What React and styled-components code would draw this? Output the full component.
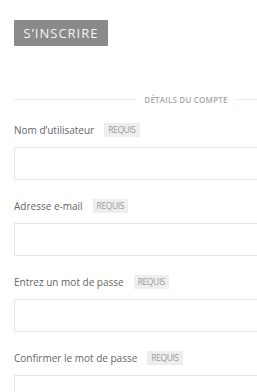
import styled, { createGlobalStyle } from "styled-components";

const GlobalStyle = createGlobalStyle`
  html, body {
    margin: 0;
    padding: 0;
    background: #fff;
    overflow: hidden;
  }
  body {
    font-family: "Open Sans", "Liberation Sans", sans-serif;
  }
`;

const Page = styled.div`
  width: 344px;
  padding: 20px 0 0 14px;
`;

const SignupButton = styled.button`
  all: unset;
  display: inline-flex;
  align-items: center;
  justify-content: center;
  box-sizing: border-box;
  width: 94px;
  height: 26px;
  background: #8a8a8a;
  color: #f4f4f4;
  font-family: "Open Sans", sans-serif;
  font-size: 13px;
  letter-spacing: 1px;
  border-radius: 1px;
  cursor: pointer;
`;

const Divider = styled.div`
  display: flex;
  align-items: center;
  gap: 8px;
  margin-top: 48px;
  font-size: 8px;
  font-weight: 600;
  color: #a8a8a8;
  text-transform: uppercase;
  letter-spacing: 0.2px;
  &::before,
  &::after {
    content: "";
    flex: 1;
    height: 1px;
    background: #ececec;
  }
`;

const Field = styled.div`
  margin-top: ${(p) => p.$top}px;
`;

const Label = styled.label`
  display: flex;
  align-items: center;
  gap: 10px;
  font-size: 10px;
  color: #666;
  height: 15px;
`;

const Badge = styled.span`
  display: inline-block;
  background: #eeeeee;
  color: #9c9c9c;
  font-size: 8.5px;
  padding: 1px 4px;
  line-height: 12px;
  letter-spacing: -0.4px;
  text-transform: uppercase;
`;

const Input = styled.input`
  display: block;
  box-sizing: border-box;
  width: 100%;
  height: 33px;
  margin-top: 10px;
  border: 1px solid #e6e6e6;
  background: #fff;
  outline: none;
`;

const fields = [
  "Nom d’utilisateur",
  "Adresse e-mail",
  "Entrez un mot de passe",
  "Confirmer le mot de passe",
];

export default function App() {
  return (
    <>
      <GlobalStyle />
      <Page>
        <SignupButton>S’INSCRIRE</SignupButton>
        <Divider>Détails du compte</Divider>
        {fields.map((f, i) => (
          <Field key={f} $top={i === 0 ? 17 : 18}>
            <Label>
              {f}
              <Badge>Requis</Badge>
            </Label>
            <Input type={i > 1 ? "password" : "text"} />
          </Field>
        ))}
      </Page>
    </>
  );
}
